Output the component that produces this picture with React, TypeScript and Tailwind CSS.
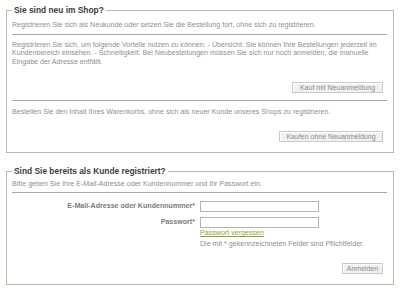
import React from 'react';

const Btn: React.FC<{ label: string; w: string }> = ({ label, w }) => (
  <div className="flex justify-end pr-[4px]">
    <button
      type="button"
      className={`${w} h-[11px] border border-[#c9c9c9] bg-[#f1f1f1] text-[7px] leading-[9px] text-[#8a8a8a] shadow-[inset_1px_1px_0_#fff]`}
    >
      {label}
    </button>
  </div>
);

const App: React.FC = () => {
  return (
    <div className="w-[400px] h-[292px] bg-white px-[6px] pt-[6px] font-['Liberation_Sans',Arial,sans-serif] text-[7.1px] leading-[8.5px] text-[#8f8f8f]">
      {/* Neukunde */}
      <fieldset className="w-[388px] border border-[#bcbca3] pl-[5px] pr-[6px] pb-[10px]">
        <legend className="px-[2px] text-[8.4px] leading-[9px] font-bold text-[#3d3d3d]">Sie sind neu im Shop?</legend>
        <p className="mt-[6px]">Registrieren Sie sich als Neukunde oder setzen Sie die Bestellung fort, ohne sich zu registrieren.</p>
        <div className="mt-[4px] border-t border-[#a8a8a8]" />
        <p className="mt-[6px]">
          Registrieren Sie sich, um folgende Vorteile nutzen zu können: - Übersicht: Sie können Ihre Bestellungen jederzeit im
          Kundenbereich einsehen. - Schnelligkeit: Bei Neubestellungen müssen Sie sich nur noch anmelden, die manuelle
          Eingabe der Adresse entfällt.
        </p>
        <div className="mt-[16px]">
          <Btn label="Kauf mit Neuanmeldung" w="w-[91px]" />
        </div>
        <div className="mt-[7px] border-t border-[#a8a8a8]" />
        <p className="mt-[7px]">Bestellen Sie den Inhalt Ihres Warenkorbs, ohne sich als neuer Kunde unseres Shops zu registrieren.</p>
        <div className="mt-[14px]">
          <Btn label="Kaufen ohne Neuanmeldung" w="w-[104px]" />
        </div>
      </fieldset>

      {/* Login */}
      <fieldset className="mt-[14px] w-[388px] border border-[#bcbca3] pl-[5px] pr-[6px] pb-[10px]">
        <legend className="px-[2px] text-[8.4px] leading-[9px] font-bold text-[#3d3d3d]">Sind Sie bereits als Kunde registriert?</legend>
        <p className="mt-[4px]">Bitte geben Sie Ihre E-Mail-Adresse oder Kundennummer und Ihr Passwort ein.</p>
        <div className="mt-[4px] border-t border-[#a8a8a8]" />
        <div className="mt-[8px] grid grid-cols-[183px_119px] gap-x-[5px] gap-y-[5px] items-center">
          <label className="text-right font-bold text-[#7c7c7c]">E-Mail-Adresse oder Kundennummer*</label>
          <input className="h-[11px] border border-[#b4b4aa] bg-white outline-none" />
          <label className="text-right font-bold text-[#7c7c7c]">Passwort*</label>
          <input type="password" className="h-[11px] border border-[#b4b4aa] bg-white outline-none" />
        </div>
        <div className="ml-[188px] mt-[1px]">
          <a className="text-[#97a032] underline">Passwort vergessen</a>
          <p className="mt-[2.5px]">Die mit * gekennzeichneten Felder sind Pflichtfelder.</p>
        </div>
        <div className="mt-[14px]">
          <Btn label="Anmelden" w="w-[41px]" />
        </div>
      </fieldset>
    </div>
  );
};

export default App;
